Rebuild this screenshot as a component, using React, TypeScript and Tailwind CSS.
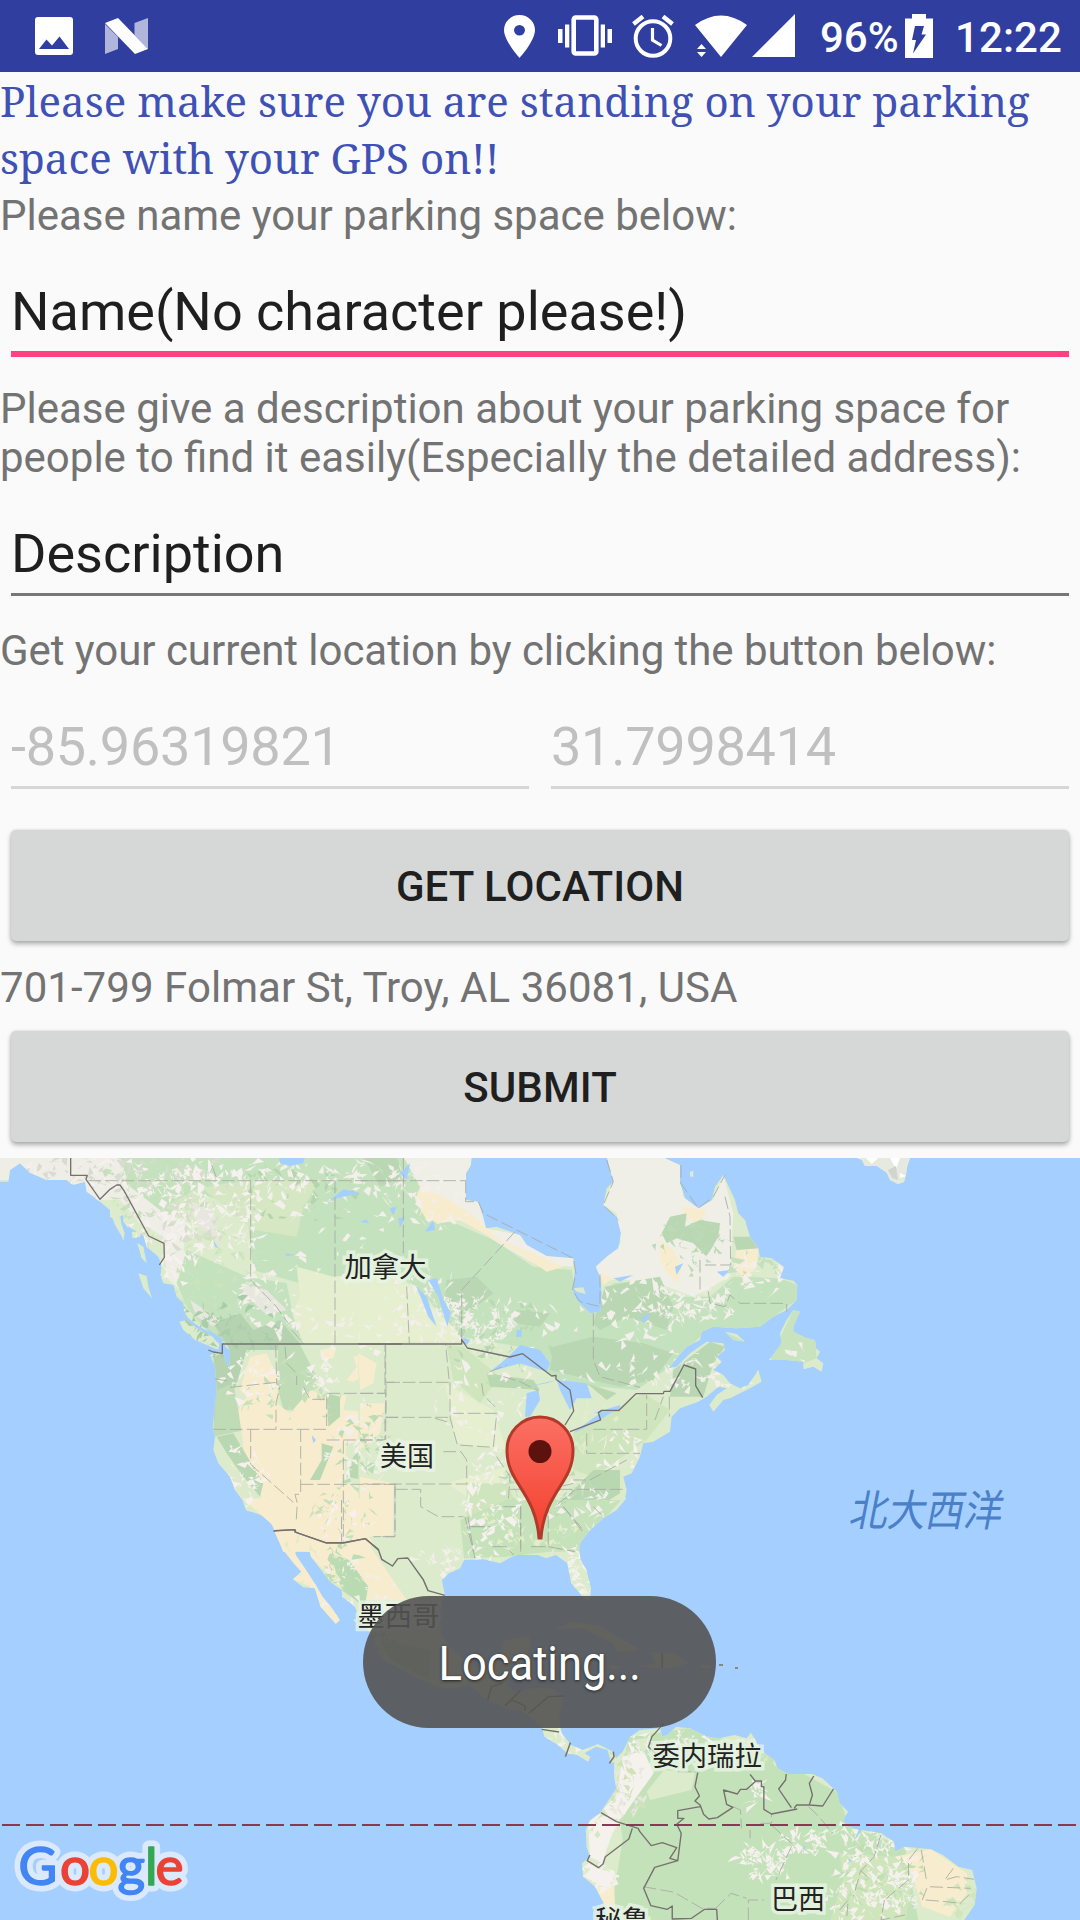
import React from 'react';

const WATER = '#a5cfff';
const NW = 'translate(0 1150) scale(.33333)';
const NE = 'translate(360 1150) scale(.33333)';
const MID = 'translate(200 1500) scale(.38265 .33333)';
const SA = 'translate(540 1640) scale(.34439 .33333)';

const land: [string, string][] = [
  [NW, 'M-5 20V95H25L30 60 60 40 90 68 140 90H200L218 105 255 95 260 125 300 155 330 180 330 200 350 215 370 272 374 250 357 200 372 195 380 215 392 235 430 255 440 290 475 320 485 345 482 375 490 400 520 405 530 440 550 460 552 485 565 505 590 525 625 545 662 570 685 600 690 655 678 640 670 612 650 608 630 615 645 650 650 720 638 830 645 860 640 900 655 940 690 980 705 1020 735 1060 740 1082 775 1090 810 1115 825 1140 850 1205H1205V20Z'],
  [NW, 'M538 515L560 510 590 535 640 560 658 582 655 600 620 585 585 570 550 540ZM415 370L440 378 445 410 456 445 430 415ZM412 280L430 290 440 340 425 325ZM395 245L425 245 420 260 398 265ZM368 180L390 190 385 235 370 215ZM330 185L360 195 372 270 345 225Z'],
  [NE, 'M-5 20H335L333 45 318 70 318 150 355 155 370 200 378 235 410 230 480 255 500 285 560 318 640 325 645 360 637 420 650 450 690 490 722 485 725 430 720 380 707 350 740 320 775 295 783 250 770 200 730 165 740 115 760 95 740 20H905L960 45 960 100 975 145 1015 175 1055 150 1065 110 1090 75 1125 150 1135 190 1155 210 1170 260 1195 295 1200 320 1235 325 1272 350 1260 385 1300 392 1312 405 1310 450 1280 480 1240 500 1200 530 1130 535 1060 530 1025 545 1020 570 980 590 950 625 925 655 950 650 990 610 1040 575 1090 580 1095 600 1070 620 1085 635 1060 660 1090 675 1110 700 1140 715 1165 705 1195 660 1205 695 1170 715 1110 745 1090 750 1060 785 1048 765 1070 735 1100 715 1075 710 1040 740 1015 755 960 775 935 800 930 845 880 875 850 880 840 920 815 970 790 980 800 1020 795 1050 770 1080 730 1105 690 1140 660 1180 655 1215H-5Z'],
  [NE, 'M1228 630L1265 580 1260 550 1280 510 1300 480 1320 485 1300 530 1300 545 1340 565 1365 570 1368 595 1380 605 1370 625 1390 640 1385 665 1360 650 1330 658 1330 635 1280 630ZM1095 545L1130 552 1155 575 1120 570ZM990 65L1000 62V80H990ZM640 415L670 412 677 432 650 425Z'],
  [MID, 'M110 -5L120 30 160 45 190 75 195 95 215 145 245 190 265 215 243 238 270 262 300 265 315 320 355 372 366 360 345 325 320 290 305 260 280 215 265 190 250 165 245 120 265 120 280 125 290 170 310 200 340 245 370 270 372 290 405 320 420 370 455 410 460 450 480 480 560 530 620 560 660 565 705 555 750 600 800 625 845 635 893 680 900 710 935 735 960 760 985 765 1015 785 1020 770 1005 760 1035 740 1065 750 1075 790 1090 780 1080 755 1040 732 1000 750 970 735 945 700 938 650 950 590 920 565 870 565 820 575 800 550 840 490 865 440 860 410 795 420 785 470 740 510 690 480 650 440 630 400 625 330 640 285 632 240 650 220 680 205 690 180 740 178 785 190 815 170 860 155 905 175 930 165 960 190 970 250 1000 290 1018 305 1022 265 1010 210 995 180 990 145 1000 105 1045 60 1090 20 1115 -5Z'],
  [MID, 'M925 388L975 365 1040 375 1150 450 1090 455 1080 430 1000 385ZM1178 455L1240 460 1280 490 1220 505 1150 500 1190 490ZM1065 495L1105 500 1080 510ZM1310 495H1335V504H1310Z'],
  [SA, 'M365 240L345 265 290 270 262 290 240 335 215 360 215 410 222 445 190 495 175 520 145 540 133 570 135 620 145 650 122 670 125 710 160 740 185 790 200 850H1225L1262 795 1268 745 1255 690 1215 680 1170 645 1135 628 1060 620 1030 635 1028 605 990 580 935 570 910 605 925 570 895 560 880 540 895 515 870 490 862 455 820 415 790 402H720L690 385 680 360 640 330 620 290 612 278 600 295 565 285 520 295 485 290 435 265 395 260 370 285 355 290 350 270Z'],
];

/* [transform, fill, path] */
const tones: [string, string, string][] = [
  [NW, '#c5e2be', 'M350 20H1205V560L900 400 760 360 740 180 600 130 500 200 380 130Z'],
  [NW, '#eeeee6', 'M0 20H360L390 110 480 180 560 220 550 300 600 380 560 440 500 380 490 260 420 220 360 150 300 150 200 90H-5Z'],
  [NW, '#d5e7c3', 'M600 110L750 92H960L910 170 890 260 760 240 700 190ZM480 180L600 110 600 160Z'],
  [NW, '#e5eecf', 'M890 350L1000 380 1205 360V580H910L870 500 900 440Z'],
  [NW, '#c5e2be', 'M560 300L740 380 860 400 880 500 910 582H660L600 520 560 470 530 400Z'],
  [NW, '#b5d3b0', 'M640 520L720 490 760 540 840 510 900 582 890 640 850 600 740 600 710 700 640 860 645 700 640 620 690 600Z'],
  [NW, '#c0dcb7', 'M835 584H900L950 680 920 740 890 780 850 780 830 700ZM700 700L650 720 640 860 735 840 715 780Z'],
  [NW, '#f8eccf', 'M750 620L800 610 835 690 830 760 870 790 930 720 980 740 1040 735 1030 780 1157 790 1150 870 1040 880 1030 1000 1180 1010 1185 1160 1205 1205H850L800 1100 780 1030 735 920 715 780 740 740 720 720ZM960 600L1010 590 1000 625 965 630ZM1060 620L1110 610 1130 660 1060 695 1040 690 1070 650Z'],
  [NW, '#b9d8b2', 'M650 860L700 850 790 1000 780 1040 730 980 680 910ZM980 730L1020 740 1020 800 985 830ZM1060 920L1100 880 1130 860 1120 940 1090 990 1040 980ZM965 880L1000 890 960 990 930 990 965 930ZM950 1050L1000 1080 1060 1120 1040 1130 970 1110Z'],
  [NW, '#dceacb', 'M690 950L740 1000 790 1060 770 1080 740 1080 700 1010Z'],
  [NW, '#e7e6df', 'M730 400L800 420 860 480 800 495 730 430ZM560 150L640 180 660 280 600 230ZM570 450L660 510 640 530 590 500Z'],
  [NE, '#c4e2bd', 'M-5 20H130L240 200 400 270 520 350 635 360 650 450 700 490 760 400 870 390 960 440 1050 440 1120 380 1260 385 1312 405 1310 450 1200 530 1020 560 930 650 830 720 600 700 480 590 300 560 180 420 0 300Z'],
  [NE, '#efefe7', 'M130 20H335L318 150 355 155 378 235 480 255 560 318 640 325 637 350 520 340 400 270 300 180 180 110ZM740 20H905L960 45 970 140 1015 175 1060 150 1090 75 1120 190 1110 380 1000 440 870 390 760 390 720 380 707 350 783 280 770 190 730 165 760 95Z'],
  [NE, '#f8eccf', 'M180 110L250 140 330 190 420 270 520 310 610 350 560 365 480 310 370 250 300 210 240 220 200 210 165 150ZM900 270L940 300 965 350 955 400 920 370 900 330ZM1130 300L1195 295 1190 350 1150 390 1120 340ZM720 370L760 385 730 405ZM960 170L1040 180 1010 230Z'],
  [NE, '#bad7b3', 'M735 410L840 390 900 380 940 470 920 540 800 500 720 540 700 520ZM580 590L700 560 850 580 940 610 880 690 780 710 570 660ZM470 480L570 490 540 530 460 520ZM260 390L350 380 400 430 310 500 255 450ZM905 250L930 200 980 190 975 230 1020 210 1080 220 1075 260 1040 320 1000 280 950 265 920 280ZM940 660L1050 575 1095 590 1060 640 1030 740 930 740ZM1120 260L1170 260 1195 295 1130 300ZM10 20H110L130 80 60 110Z'],
  [NE, '#dcebcb', 'M-5 584H260L280 1000 450 1205H-5Z'],
  [NE, '#e6efcf', 'M-5 420L140 400 300 550 300 575H-5ZM255 700L400 780 440 900 290 880ZM260 1000L440 950 380 1080Z'],
  [NE, '#f8eccf', 'M-5 610L50 640 40 700 0 720ZM0 760L75 760 60 850 0 900ZM0 980L100 1000 100 1160 0 1200Z'],
  [NE, '#cfe5bd', 'M260 585L310 590 420 680 360 760 280 690ZM640 850L850 730 930 780 860 870 700 980 640 960ZM320 1000L440 1000 540 1205H320Z'],
  [NE, '#b9d8b2', 'M380 670L520 690 540 720 390 710ZM700 960L780 960 780 1030 700 1080 600 1060ZM680 700L770 730 740 750Z'],
  [NE, '#c8e3bd', 'M540 1100L680 1060 660 1205H540ZM1228 630L1300 480 1320 485 1300 545 1365 570 1370 625 1330 640 1280 630ZM1095 545L1155 575 1120 570Z'],
  [MID, '#f8eccf', 'M110 -5H505V100L430 115 540 300 400 300 290 170 190 75ZM195 95L240 120 270 190 365 360 355 372 315 320 300 265 243 238Z'],
  [MID, '#b9dbb1', 'M340 160L390 180 440 260 430 320 370 270ZM470 420L600 450 600 540 500 480Z'],
  [MID, '#dcebcb', 'M505 0H700L680 200 635 240 620 280 540 180 490 180 440 110 505 105Z'],
  [MID, '#c5e2ba', 'M680 60L800 0H1100L990 145 800 170 690 175Z'],
  [SA, '#c4e2ba', 'M260 290L430 265 640 330 860 455 900 560 1060 620 1100 850H200L240 600 220 440Z'],
  [SA, '#f5f2ee', 'M300 330L330 400 260 500 210 580 180 670 145 650 140 550 220 470 240 350ZM150 680L215 700 200 750 130 710Z'],
  [SA, '#dcebcb', 'M360 390L450 400 440 450 320 480 310 455ZM270 300L330 290 300 340Z'],
  [SA, '#f8eccf', 'M1030 650L1135 628 1240 700 1240 760 1190 830 1110 800 1080 700ZM160 740L215 740 220 830 185 790Z'],
  [SA, '#cfe6bd', 'M870 640L1030 650 1080 720 1060 850H840L880 720Z'],
];

const lakes: [string, string][] = [
  [NE, 'M440 625L480 585 540 600 570 640 560 665 480 640 390 665ZM500 730L535 720 540 750 510 800 495 800ZM590 690L680 700 695 745 650 745 630 780 600 720ZM590 690L560 700 500 710ZM650 840L720 790 780 770 720 810 640 850ZM700 790L780 765 780 785ZM205 390L230 385 250 450 272 490 262 530 235 440ZM170 410L200 440 230 530 205 500ZM470 540H485V560L468 562ZM845 500L875 490 850 520ZM760 385L820 375 780 395ZM945 350L970 340 950 375ZM1070 365L1110 360 1090 380ZM195 245L220 210 225 240ZM90 175L105 170 100 195ZM115 205L135 200 120 235ZM120 70L150 40 140 90ZM305 560L330 570 320 585Z'],
  [NW, 'M835 20H915L910 40 870 48 840 40ZM985 155L1030 118 1080 130 1010 145ZM1080 215L1100 208 1105 220ZM1170 180L1190 170 1180 195ZM640 270L655 295 645 290ZM855 310L885 315 860 318ZM935 855L948 870 940 880ZM618 535L675 572 650 575ZM660 585L690 600 690 625Z'],
  [SA, 'M765 620L770 615 765 645ZM893 655L905 660 900 668Z'],
];

const states: [string, string][] = [
  [NW, 'M265 92H1200M752 92V390M752 390L825 465 865 520M875 540L910 580M1005 92V582M635 45L652 90M645 687L680 692M690 712L830 697M827 585L830 700 840 710 828 760V838M855 590L860 640 890 670V705M910 710L930 748H980M640 838H980V730H1157V870M980 870H1157M752 838V943L880 1057M902 838V1033H885L892 1060 888 1120M902 1003H1200M1030 872V1175M1157 585V697H1200M1157 802H1200M1185 1010V1160H1140'],
  [NE, 'M0 92H317M130 24V310M140 410L148 580M317 92V155H355L370 190 640 325 648 370 637 420 660 455 720 470 720 370M465 245L305 420V580M700 490V630L720 680 840 712M740 30L760 95 730 165 775 210M963 45V100L1015 175 1060 140 1095 75M1095 140L1110 200 1112 345H1035M1020 330V420M1045 425L1050 460 1095 470 1110 435 1140 460H1280V485M0 730H75V585M78 697H268L257 585M78 700V802H270M0 870H75V802M270 697V802L292 885 400 892 410 790H280M365 700L370 735 405 770M390 665L440 645M430 680L480 695 535 722M225 805L270 818M250 905H303L320 930V1002H10M105 1002V1160H40M105 1018H182V1070L235 1100H310M430 1070H482V1205M450 1018H800M640 990L690 990 800 930M680 850V910H840M700 838H860V735M885 810L910 740M928 740V800M410 920L450 980 445 1050M315 1100L340 1205M335 1130H390M610 1070L665 1135M560 1020L640 1000M590 1065L645 1020M700 1070L730 1100'],
  [MID, 'M370 0V125M700 50L718 175M705 80H760M765 140H800L820 165M838 20V145M865 140H910V30M910 140L980 155M950 20L1000 95'],
  [SA, 'M400 395H455M560 500L582 510 585 565M640 550H672V520M672 555L730 610M730 620L685 720M610 570V595M780 500L810 530 850 580M300 740L390 757 470 805 510 805M510 805L555 760 600 775M605 840V780H650M990 585L970 650 930 695 910 770M1095 628L1070 660V720L1000 780M1107 630L1122 720M1200 685L1175 720 1210 710 1260 718M1110 780L1125 740 1250 745M1120 780L1180 785 1220 790 1250 760M930 690L950 710M870 810L895 780 890 840M1000 780L990 840 1060 825'],
];
const borders: [string, string][] = [
  [NW, 'M212 24V76H262L258 88 300 148 330 118 350 105 360 105 372 122 446 258 492 280 493 322 478 345M625 600L640 606 667 610V582H1205M822 1142L885 1139 888 1147 978 1179H1030L1097 1166 1135 1200'],
  [NE, 'M-5 582H305V568L322 594 450 621 488 611 575 678 588 676V688L630 720 641 783 615 825M630 845L722 810 715 788 725 781H777L828 731H910L912 724H930L972 645 1007 657V707L1028 743'],
  [MID, 'M192 93L248 89V96L328 128H376L432 116 466 148 475 178 503 198 517 176 543 174 583 238 596 272 640 286M752 600L762 560 790 550M797 618L838 570M815 600L850 618V632M860 640L910 590 952 588M893 688L938 696M968 728L955 770M1080 755L1082 770 1070 790M1208 458V505'],
  [SA, 'M360 250L325 290 315 320 340 345M458 398L450 440 463 468 450 483 465 495 475 523 490 537 515 533 560 502 542 493 533 450 573 462 582 448H600L627 423H643V440H650V508L672 522 747 507M610 403L625 423M715 402L713 420 693 447 730 503M795 408L782 430 791 465 782 495H745L738 505M852 447L821 498 782 495M465 500L400 512V535H418L397 553 410 580 400 662 377 655 397 623 355 608 323 617 290 575 285 565 222 545 177 518M268 565L258 597 190 650 183 672 170 683 137 662 145 645M400 662L333 682 301 745 322 797 370 808 384 798V837L440 835 478 808H513L515 840'],
];

/* Small terrain patches: [cx, cy, rx, ry, count, colour] */
const flecks: [number, number, number, number, number, string][] = [
  [150, 1190, 60, 30, 60, '#c5e0ba'], [215, 1270, 50, 45, 50, '#cbe4bd'],
  [90, 1180, 90, 22, 70, '#f6f1ee'], [170, 1230, 40, 55, 110, '#f6f1ee'], [215, 1215, 50, 50, 100, '#f6f1ee'],
  [240, 1175, 100, 18, 70, '#f6f1ee'], [180, 1200, 60, 50, 70, '#d9ddcd'], [100, 1172, 90, 15, 60, '#d9dad0'],
  [205, 1330, 35, 25, 30, '#a9cda8'], [265, 1300, 30, 30, 40, '#f3efea'], [235, 1330, 45, 30, 40, '#a9cda8'],
  [320, 1220, 80, 60, 50, '#f3efea'], [330, 1330, 70, 30, 30, '#f3efea'], [300, 1195, 60, 35, 35, '#b5d6ad'],
  [400, 1180, 60, 20, 60, '#f3efea'], [430, 1310, 45, 35, 80, '#f3efea'], [480, 1325, 40, 25, 90, '#f3efea'],
  [560, 1340, 80, 45, 30, '#f3efea'], [500, 1340, 60, 40, 40, '#b9d7b2'], [640, 1310, 50, 30, 50, '#f3efea'],
  [690, 1305, 40, 20, 60, '#f3efea'], [740, 1280, 50, 30, 40, '#f3efea'], [690, 1240, 35, 25, 50, '#bcdab5'],
  [670, 1370, 55, 20, 40, '#f3efea'], [735, 1375, 35, 25, 25, '#f3efea'], [760, 1280, 25, 30, 30, '#c4e0bd'],
  [440, 1205, 30, 25, 35, '#f3efea'], [255, 1380, 30, 25, 45, '#f6f1ee'], [320, 1380, 20, 20, 25, '#f6f1ee'],
  [245, 1480, 20, 40, 40, '#f6f1ee'], [360, 1450, 30, 40, 55, '#f3efea'], [370, 1450, 30, 45, 45, '#bddcb4'],
  [290, 1400, 50, 25, 35, '#c6e1ba'], [340, 1510, 30, 30, 30, '#c6e1ba'], [345, 1520, 30, 20, 20, '#f6f1ee'],
  [490, 1500, 30, 60, 80, '#f6f1ee'], [520, 1530, 60, 20, 35, '#e3edc9'], [540, 1480, 60, 45, 50, '#bddcb4'],
  [580, 1510, 45, 30, 35, '#f3efea'], [625, 1450, 25, 25, 25, '#f6f1ee'], [480, 1400, 50, 35, 35, '#f3efea'],
  [590, 1425, 40, 30, 25, '#e0edcb'], [300, 1580, 50, 40, 40, '#e3ebc6'], [350, 1590, 40, 30, 45, '#f3efea'],
  [580, 1575, 15, 30, 45, '#f6f1ee'], [340, 1640, 60, 40, 50, '#b8d8ae'], [780, 1355, 40, 20, 15, '#f3efea'],
  [335, 1570, 18, 30, 30, '#bddcb4'], [450, 1560, 35, 12, 30, '#f3efea'],
  [620, 1780, 25, 45, 50, '#e9e7df'], [620, 1790, 20, 40, 35, '#cfe2b8'], [660, 1740, 60, 10, 30, '#f6f1ee'],
  [760, 1755, 30, 15, 20, '#dcebcb'], [765, 1862, 25, 14, 60, '#f6f1ee'], [800, 1845, 30, 10, 35, '#f6f1ee'],
  [880, 1870, 50, 40, 60, '#c0dfb0'], [880, 1870, 40, 30, 90, '#f6f1ee'], [870, 1900, 50, 20, 70, '#f6f1ee'],
  [860, 1832, 30, 7, 30, '#f6f1ee'], [600, 1880, 15, 15, 30, '#f6f1ee'], [560, 1750, 30, 20, 25, '#f6f1ee'],
  [757, 1793, 6, 10, 14, '#f6f1ee'], [965, 1895, 15, 20, 20, '#cfe6bd'], [590, 1820, 12, 25, 25, '#d5e8be'],
];

function fleckPath(index: number): string {
  const [cx, cy, rx, ry, count] = flecks[index];
  let seed = index * 7919 + 13;
  const rnd = () => {
    seed = (seed * 16807) % 2147483647;
    return seed / 2147483647;
  };
  rnd();
  let d = '';
  for (let i = 0; i < count; i++) {
    const a = rnd() * 6.283;
    const r = Math.sqrt(rnd());
    const x = cx + Math.cos(a) * r * rx;
    const y = cy + Math.sin(a) * r * ry;
    const p = () => (rnd() * 13 - 6.5).toFixed(1);
    d += `M${x.toFixed(1)} ${y.toFixed(1)}l${p()} ${p()} ${p()} ${p()} ${p()} ${p()}z`;
  }
  return d;
}

const labels: [string, number, number, number][] = [
  ['加拿大', 344.5, 1277, 27.3], ['美国', 380, 1466, 27], ['墨西哥', 357.5, 1625.5, 27.3],
  ['委内瑞拉', 652.5, 1766, 27.3], ['巴西', 771, 1909, 27], ['秘鲁', 595, 1930, 27],
];

const logo: [string, number, string][] = [
  ['G', 18.5, '#4285f4'], ['o', 60, '#ea4335'], ['o', 88.5, '#fbbc05'],
  ['g', 117.5, '#4285f4'], ['l', 145, '#34a853'], ['e', 155.5, '#ea4335'],
];

function MapView() {
  return (
    <div className="relative h-[762px] w-full overflow-hidden bg-[#a5cfff]">
      <svg className="block h-[762px] w-[1080px]" viewBox="0 1158 1080 762">
        <defs>
          <clipPath id="land">
            {land.map(([t, d], i) => <path key={i} transform={t} d={d} />)}
            <path d="M857 1158L862 1160 865 1166H877L887 1173 890 1180 898 1184 904 1182 906 1175 907 1167 910 1158Z" />
          </clipPath>
          <linearGradient id="pin" x1="0" y1="0" x2="0" y2="1">
            <stop offset="0" stopColor="#fb7064" />
            <stop offset="1" stopColor="#f33f2c" />
          </linearGradient>
        </defs>
        <g clipPath="url(#land)">
          <rect y="1158" width="1080" height="762" fill="#dcebcb" />
          <rect x="850" y="1158" width="80" height="30" fill="#e6e9e0" />
          <path d="M866 1158H878L872 1164ZM890 1158H900L896 1169ZM900 1173L906 1176 900 1178Z" fill="#fff" />
          <path d="M888 1170L896 1166 898 1180 892 1178Z" fill="#d0d6ce" />
          {tones.map(([t, fill, d], i) => <path key={i} transform={t} fill={fill} d={d} />)}
          {flecks.map((f, i) => <path key={i} d={fleckPath(i)} fill={f[5]} />)}
        </g>
        {lakes.map(([t, d], i) => <path key={i} transform={t} fill={WATER} d={d} />)}
        {states.map(([t, d], i) => (
          <path key={i} transform={t} d={d} fill="none" stroke="#a8aba2" strokeWidth="2.6" strokeDasharray="38 12" />
        ))}
        {borders.map(([t, d], i) => (
          <path key={i} transform={t} d={d} fill="none" stroke="#76716f" strokeWidth="4" strokeLinejoin="round" />
        ))}
        <path d="M719 1664h4v2h-4zM735 1667h3v2h-3z" fill="#8a8878" />
        <path d="M2 1825H1080" stroke="#8a3a50" strokeWidth="2" strokeDasharray="18 6" />
        {labels.map(([text, x, y, size]) => (
          <text key={text} x={x} y={y} fontSize={size} fill="#222" stroke="#eaf5e6" strokeOpacity=".75" strokeWidth="7" paintOrder="stroke" fontFamily="'Noto Sans CJK SC', sans-serif">
            {text}
          </text>
        ))}
        <text transform="translate(848 1526) skewX(-11) scale(1 1.13)" fontSize="38.2" fill="#4a80c8" fontFamily="'Noto Sans CJK SC', sans-serif">北大西洋</text>
        <g fontFamily="Lato, sans-serif" fontSize="53" strokeLinejoin="round">
          {logo.map(([c, x], i) => <text key={i} x={x} y="1884.5" fill="#dbe9fd" stroke="#dbe9fd" strokeWidth="13">{c}</text>)}
          {logo.map(([c, x, fill], i) => <text key={i} x={x} y="1884.5" fill={fill} stroke={fill} strokeWidth="1.6">{c}</text>)}
        </g>
        <path d="M540 1417a33 33 0 0 0 -33 34C507 1483 535.500 1492 539 1538H541C544.500 1492 573 1483 573 1451a33 33 0 0 0 -33 -34Z" fill="url(#pin)" stroke="#b23a2b" strokeWidth="3" />
        <circle cx="540" cy="1451.500" r="11.500" fill="#5c130e" />
      </svg>
      <div className="absolute left-[363px] top-[438px] flex h-[132px] w-[353px] items-center justify-center rounded-full bg-[#545353]/90 pt-[3px]">
        <span className="scale-x-[.905] whitespace-nowrap text-[48px] leading-none text-white [text-shadow:0_1px_3px_#222]">Locating...</span>
      </div>
    </div>
  );
}

function StatusBar() {
  return (
    <header className="flex h-[72px] shrink-0 items-start bg-[#303f9f] pt-[14px] text-white">
      <svg className="ml-[35px] mt-[3px] h-[38px] w-[38px] shrink-0" viewBox="0 0 38 38">
        <path fillRule="evenodd" fill="#fff" d="M3 0H35Q38 0 38 3V35Q38 38 35 38H3Q0 38 0 35V3Q0 0 3 0ZM4 32H34L24.500 19.500 17 28.500 11.500 22.500Z" />
      </svg>
      <svg className="ml-[32px] mt-[4px] h-[36px] w-[43px] shrink-0" viewBox="0 0 43 36">
        <path d="M0 6L13 19V31L0 36ZM29.500 5L43 0V31L29.500 17Z" fill="#b0b5db" />
        <path d="M0 5L13 0 43 31 30 36Z" fill="#fff" />
      </svg>
      <svg className="ml-[356px] mt-[1px] h-[43px] w-[31px] shrink-0" viewBox="0 0 30 43" preserveAspectRatio="none">
        <path fillRule="evenodd" fill="#fff" d="M15 0A15 15 0 0 0 0 15C0 26 15 43 15 43S30 26 30 15A15 15 0 0 0 15 0ZM15 10a5.300 5.300 0 1 1 0 10.600a5.300 5.300 0 1 1 0 -10.600Z" />
      </svg>
      <svg className="ml-[23px] mt-[1px] h-[42px] w-[54px] shrink-0" viewBox="0 0 54 42" fill="#fff">
        <path d="M0 14H4.500V28H0ZM7 9.500H11.300V32.500H7ZM42.700 9.500H47V32.500H42.700ZM49.500 14H54V28H49.500Z" />
        <rect x="15.700" y="2.500" width="22.600" height="36" rx="2" fill="none" stroke="#fff" strokeWidth="4.600" />
      </svg>
      <svg className="ml-[20px] mt-[1px] h-[43px] w-[42px] shrink-0" viewBox="0 0 42 43" fill="none" stroke="#fff">
        <circle cx="21" cy="23.500" r="17.300" strokeWidth="4" />
        <path d="M20.500 13V25L29.500 30.500" strokeWidth="3.200" />
        <path d="M1.500 9L11 1.500M31 1.500L40.500 9" strokeWidth="4.400" />
      </svg>
      <svg className="ml-[21px] mt-[1px] h-[43px] w-[54px] shrink-0" viewBox="0 0 54 43" fill="#fff">
        <path d="M0 10Q26 -9 52 10L26 42ZM2 34L6.500 29 11 34ZM2 37H11L6.500 42Z" />
      </svg>
      <svg className="ml-[3px] h-[43px] w-[43px] shrink-0" viewBox="0 0 43 43" fill="#fff"><path d="M43 0V43H0Z" /></svg>
      <span className="ml-[25px] mt-[2px] w-[80px] whitespace-nowrap text-[42px] font-medium leading-[44px]">96%</span>
      <svg className="ml-[5px] h-[44px] w-[28px] shrink-0" viewBox="0 0 28 44">
        <path d="M7 0H21V4.500H28V44H0V4.500H7Z" fill="#fff" />
        <path d="M10 12H19L16.500 20.500H21L8 39.500 11 26H7Z" fill="#303f9f" />
      </svg>
      <span className="ml-[22px] mt-[2px] whitespace-nowrap text-[42px] font-medium leading-[44px] tracking-[0.1px]">12:22</span>
    </header>
  );
}

const button = 'mx-[11px] flex h-[111px] shrink-0 items-center justify-center rounded-[5px] bg-[#d6d8d7] pt-[2px] text-[42px] font-medium leading-none tracking-[0.1px] text-[#1f1f1f] shadow-[0_3px_5px_rgba(0,0,0,0.3),0_0_3px_rgba(0,0,0,0.12)]';

export default function App() {
  return (
    <div className="flex h-[1920px] w-[1080px] flex-col overflow-hidden bg-[#fafafa] font-[Roboto,sans-serif] text-[42px] leading-[49px] text-[#737373]">
      <StatusBar />
      <p className="h-[119px] shrink-0 whitespace-nowrap font-['Noto_Serif','Droid_Serif','DejaVu_Serif_Condensed','DejaVu_Serif',serif] text-[42px] leading-[57px] tracking-[0.05px] text-[#3f51b5]">
        Please make sure you are standing on your parking<br />space with your GPS on!!
      </p>
      <p className="h-[48px] shrink-0 whitespace-nowrap">Please name your parking space below:</p>
      <div className="mx-[11px] mt-[32px] flex h-[86px] shrink-0 items-start border-b-[6px] border-[#ff4081] pt-[9px] text-[54px] leading-[64px] text-[#1f1f1f]">Name(No character please!)</div>
      <p className="mt-[27px] h-[98px] shrink-0 whitespace-nowrap">
        Please give a description about your parking space for<br />people to find it easily(Especially the detailed address):
      </p>
      <div className="mx-[11px] mt-[31px] flex h-[83px] shrink-0 items-start border-b-[3px] border-[#777] pt-[9px] text-[54px] leading-[64px] text-[#1f1f1f]">Description</div>
      <p className="mt-[30px] h-[49px] shrink-0 whitespace-nowrap tracking-[-0.05px]">Get your current location by clicking the button below:</p>
      <div className="mx-[11px] mt-[31px] grid h-[83px] shrink-0 grid-cols-2 gap-[22px] text-[54px] leading-[64px] tracking-[-0.25px] text-[#c0c0c0]">
        <div className="border-b-[3px] border-[#d6d6d6] pt-[9px]">-85.96319821</div>
        <div className="border-b-[3px] border-[#d6d6d6] pt-[9px]">31.7998414</div>
      </div>
      <button className={`mt-[41px] ${button}`}>GET LOCATION</button>
      <p className="mt-[22px] h-[68px] shrink-0 whitespace-nowrap tracking-[0.05px]">701-799 Folmar St, Troy, AL 36081, USA</p>
      <button className={button}>SUBMIT</button>
      <div className="mt-auto"><MapView /></div>
    </div>
  );
}
